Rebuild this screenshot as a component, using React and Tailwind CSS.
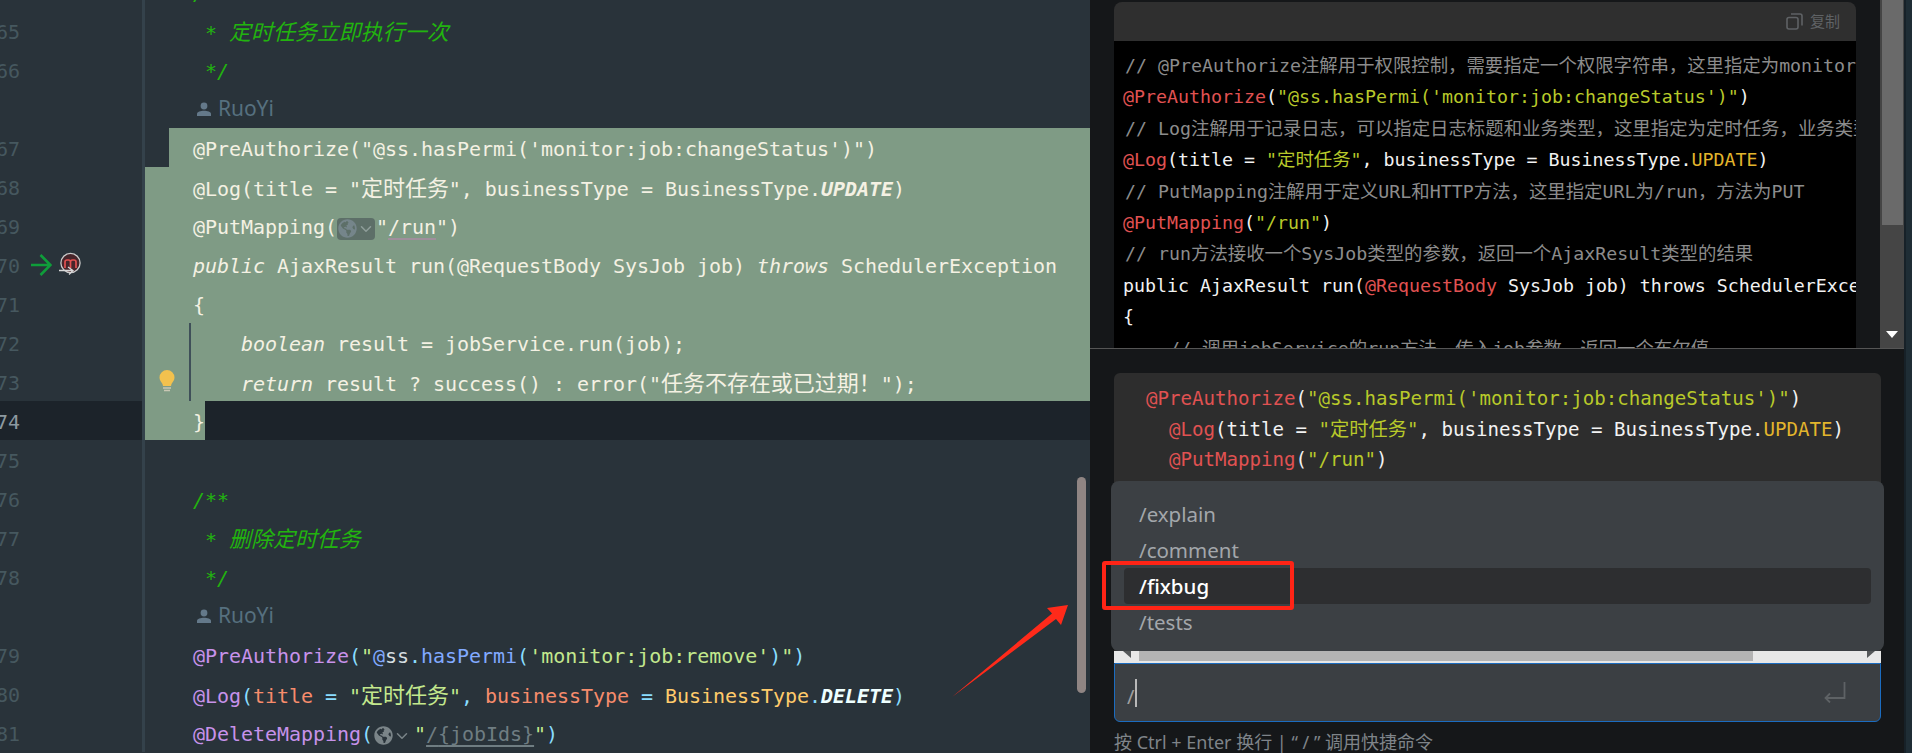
import { ChevronDown } from "lucide-react"
import { FaGlobeAmericas } from "react-icons/fa"

const MONO = "font-['DejaVu_Sans_Mono','Noto_Sans_CJK_SC',monospace]"
const SANS = "font-['Noto_Sans','Noto_Sans_CJK_SC',sans-serif]"

// left editor palette
const ANN = "text-[#c792ea]"
const PUN = "text-[#89ddff]"
const STR = "text-[#c3e88d]"
const FN = "text-[#82aaff]"
const ATTR = "text-[#f78c6c]"
const TYPE = "text-[#ffcb6b]"
const BASE = "text-[#d5dde0]"
const COMMENT = "text-[#22b30f] italic"

// right panel palette
const R_ANN = "text-[#e05252]"
const R_STR = "text-[#b8c92a]"
const R_GRAY = "pl-[2px] text-[#8c8c8c]"
const R_ENUM = "text-[#e3b52c]"

function Cn({ children }) {
  return <span className="text-[22px]">{children}</span>
}

function Rc({ children }) {
  return <span className="text-[18.4px]">{children}</span>
}

function Bc({ children }) {
  return <span className="text-[19.3px]">{children}</span>
}

function Row({ num, current, sel, first, last, gutter, children }) {
  let content = "flex-1 pl-[48px]"
  if (sel) content = "flex-1 pl-[48px] bg-[#7f9b85] text-[#f4f1e3]"
  if (first) content = "flex-1 ml-[24px] pl-[24px] bg-[#7f9b85] text-[#f4f1e3]"
  return (
    <div className={current ? "flex h-[39px] bg-[#1c232a]" : "flex h-[39px]"}>
      <div className="flex w-[142px] shrink-0 items-center">
        <span className={current ? "-ml-[10px] w-[30px] shrink-0 translate-y-[2px] text-right text-[#8d99a0]" : "-ml-[10px] w-[30px] shrink-0 translate-y-[2px] text-right text-[#46585f]"}>{num}</span>
        {gutter}
      </div>
      <div className="w-[3px] shrink-0 bg-[#34424b]" />
      {last ? (
        <div className="flex-1">
          <div className="h-full w-[60px] bg-[#7f9b85] pl-[48px] text-[#f4f1e3]">{children}</div>
        </div>
      ) : (
        <div className={content}>{children}</div>
      )}
    </div>
  )
}

function Author() {
  return (
    <div className="flex h-[39px]">
      <div className="w-[142px] shrink-0" />
      <div className="w-[3px] shrink-0 bg-[#34424b]" />
      <div className={`flex flex-1 items-center pl-[52px] ${SANS} text-[21px] text-[#56707f]`}>
        <svg width="14" height="14" viewBox="0 0 14 14" className="mr-[7px] fill-[#64798a]">
          <circle cx="7" cy="4" r="3.4" />
          <path d="M0 14v-2.2C0 9.8 3.6 8.8 7 8.8s7 1 7 3V14z" />
        </svg>
        RuoYi
      </div>
    </div>
  )
}

function Chip({ active }) {
  return (
    <span className={active ? "mr-[1px] inline-flex h-[22px] w-[38px] translate-y-[4px] items-center rounded-[4px] bg-[#5d6f68] pl-[1px]" : "mr-[1px] inline-flex h-[22px] w-[40px] translate-y-[4px] items-center pl-[1px]"}>
      <FaGlobeAmericas size={19} className={active ? "shrink-0 text-[#75858a]" : "shrink-0 text-[#7a8488]"} />
      <ChevronDown size={18} strokeWidth={2} className={active ? "shrink-0 text-[#8f9e9a]" : "shrink-0 text-[#7a8488]"} />
    </span>
  )
}

function MavenIcon() {
  return (
    <svg width="23" height="24" viewBox="0 0 23 24" className="ml-[7px] -translate-y-[1px]">
      <circle cx="11.5" cy="11" r="9.6" fill="#47252a" stroke="#c9c9c9" strokeWidth="1.3" />
      <path d="M6 16V10a2 2 0 0 1 2-2h1.5a2 2 0 0 1 2 2v6M11.5 10a2 2 0 0 1 2-2H15a2 2 0 0 1 2 2v6" fill="none" stroke="#e25050" strokeWidth="1.7" />
      <path d="M0 18.5h13M9 15l5 3.5-4 4" fill="none" stroke="#d8d8d8" strokeWidth="1.3" />
    </svg>
  )
}

function GreenArrow() {
  return (
    <svg width="21" height="22" viewBox="0 0 21 22" className="ml-[11px]">
      <path d="M0 11h19M9.5 1L19.5 11 9.5 21" fill="none" stroke="#0f9d3a" strokeWidth="2.6" />
    </svg>
  )
}

function Bulb() {
  return (
    <svg width="16" height="23" viewBox="0 0 16 23" className="absolute left-[159px] top-[8px]">
      <path d="M8 0a7.5 7.5 0 0 0-7.5 7.5c0 3 1.8 4.4 3 6.5l.5 2h8l.5-2c1.2-2.1 3-3.5 3-6.5A7.5 7.5 0 0 0 8 0z" fill="#f2c14e" />
      <path d="M4 18h8M5 20.5h6" stroke="#c9c7b4" strokeWidth="1.6" />
    </svg>
  )
}

function Editor() {
  return (
    <div className={`relative h-full w-[1090px] shrink-0 overflow-hidden bg-[#29333a] ${MONO} text-[20px] leading-[43px] tracking-[-0.04px] whitespace-pre`}>
      <div className="-mt-[28px]">
        <Row num="64"><span className={COMMENT}>/**</span></Row>
        <Row num="65"><span className={COMMENT}> * <Cn>定时任务立即执行一次</Cn></span></Row>
        <Row num="66"><span className={COMMENT}> */</span></Row>
        <Author />
        <Row num="67" first>@PreAuthorize("@ss.hasPermi('monitor:job:changeStatus')")</Row>
        <Row num="68" sel>
          @Log(title = "<Cn>定时任务</Cn>", businessType = BusinessType.<span className="font-bold italic">UPDATE</span>)
        </Row>
        <Row num="69" sel>
          @PutMapping(<Chip active />"<span className="underline decoration-[#a08f9c] underline-offset-4">/run</span>")
        </Row>
        <Row num="70" sel gutter={<><GreenArrow /><MavenIcon /></>}>
          <span className="italic">public</span> AjaxResult run(@RequestBody SysJob job) <span className="italic">throws</span> SchedulerException
        </Row>
        <Row num="71" sel>{"{"}</Row>
        <Row num="72" sel>
          <div className="-ml-[4px] h-full border-l-2 border-[#3f5059] pl-[50px]">
            <span className="italic">boolean</span> result = jobService.run(job);
          </div>
        </Row>
        <div className="relative">
          <Row num="73" sel>
            <div className="-ml-[4px] h-full border-l-2 border-[#3f5059] pl-[50px]">
              <span className="italic">return</span> result ? success() : error("<Cn>任务不存在或已过期！</Cn>");
            </div>
          </Row>
          <Bulb />
        </div>
        <Row num="74" current last>{"}"}</Row>
        <Row num="75" />
        <Row num="76"><span className={COMMENT}>/**</span></Row>
        <Row num="77"><span className={COMMENT}> * <Cn>删除定时任务</Cn></span></Row>
        <Row num="78"><span className={COMMENT}> */</span></Row>
        <Author />
        <Row num="79">
          <span className={ANN}>@PreAuthorize</span><span className={PUN}>(</span><span className={STR}>"</span><span className={FN}>@</span><span className={BASE}>ss</span><span className={PUN}>.</span><span className={FN}>hasPermi</span><span className={PUN}>(</span><span className={STR}>'monitor:job:remove'</span><span className={PUN}>)</span><span className={STR}>"</span><span className={PUN}>)</span>
        </Row>
        <Row num="80">
          <span className={ANN}>@Log</span><span className={PUN}>(</span><span className={ATTR}>title</span> <span className={PUN}>=</span> <span className={STR}>"<Cn>定时任务</Cn>"</span><span className={PUN}>,</span> <span className={ATTR}>businessType</span> <span className={PUN}>=</span> <span className={TYPE}>BusinessType</span><span className={PUN}>.</span><span className="font-bold italic text-[#eeffff]">DELETE</span><span className={PUN}>)</span>
        </Row>
        <Row num="81">
          <span className={ANN}>@DeleteMapping</span><span className={PUN}>(</span><Chip /><span className={STR}>"</span><span className="text-[#6f7d82] underline decoration-[#6f7d82] underline-offset-4">/{"{jobIds}"}</span><span className={STR}>"</span><span className={PUN}>)</span>
        </Row>
      </div>
      <div className="absolute left-[1077px] top-[477px] h-[216px] w-[9px] rounded-full bg-[#8f8583]" />
    </div>
  )
}

function AnswerPane() {
  return (
    <div className="flex h-[348px] shrink-0 pl-[24px]">
      <div className="mt-[2px] flex w-[742px] shrink-0 flex-col">
        <div className="flex h-[39px] shrink-0 items-center justify-end rounded-t-[8px] bg-[#2f2f2f] pr-[16px] text-[#5f6265]">
          <svg width="17" height="17" viewBox="0 0 17 17" fill="none" stroke="currentColor" strokeWidth="1.6" className="mr-[7px]">
            <rect x="1" y="4.5" width="11" height="11.5" rx="2" />
            <path d="M5 1h9a2 2 0 0 1 2 2v9.5" />
          </svg>
          <span className={`${SANS} text-[15px]`}>复制</span>
        </div>
        <div className={`flex-1 overflow-hidden bg-black pl-[9px] pt-[9px] ${MONO} text-[18.27px] leading-[31.4px] whitespace-pre text-[#f2f2f2]`}>
          <div className={R_GRAY}>// @PreAuthorize<Rc>注解用于权限控制，需要指定一个权限字符串，这里指定为</Rc>monitor:job:changeStatus</div>
          <div><span className={R_ANN}>@PreAuthorize</span>(<span className={R_STR}>"@ss.hasPermi('monitor:job:changeStatus')"</span>)</div>
          <div className={R_GRAY}>// Log<Rc>注解用于记录日志，可以指定日志标题和业务类型，这里指定为定时任务，业务类型为更新</Rc></div>
          <div><span className={R_ANN}>@Log</span>(title = <span className={R_STR}>"<Rc>定时任务</Rc>"</span>, businessType = BusinessType.<span className={R_ENUM}>UPDATE</span>)</div>
          <div className={R_GRAY}>// PutMapping<Rc>注解用于定义</Rc>URL<Rc>和</Rc>HTTP<Rc>方法，这里指定</Rc>URL<Rc>为</Rc>/run<Rc>，方法为</Rc>PUT</div>
          <div><span className={R_ANN}>@PutMapping</span>(<span className={R_STR}>"/run"</span>)</div>
          <div className={R_GRAY}>// run<Rc>方法接收一个</Rc>SysJob<Rc>类型的参数，返回一个</Rc>AjaxResult<Rc>类型的结果</Rc></div>
          <div>public AjaxResult run(<span className={R_ANN}>@RequestBody</span> SysJob job) throws SchedulerException</div>
          <div>{"{"}</div>
          <div className={R_GRAY}>    // <Rc>调用</Rc>jobService<Rc>的</Rc>run<Rc>方法，传入</Rc>job<Rc>参数，返回一个布尔值</Rc></div>
        </div>
      </div>
      <div className="ml-[24px] flex w-[24px] shrink-0 flex-col bg-[#454545]">
        <div className="ml-[2px] mr-[1px] h-[225px] bg-[#6a6a6a]" />
        <svg width="12" height="7" viewBox="0 0 12 7" className="ml-[6px] mt-[106px] fill-white">
          <path d="M0 0h12L6 7z" />
        </svg>
      </div>
    </div>
  )
}

function SlashMenu() {
  const items = ["/explain", "/comment", "/fixbug", "/tests"]
  return (
    <div className={`absolute left-[21px] top-[132px] h-[170px] w-[773px] rounded-[8px] bg-[#3c4044] px-[13px] pt-[15px] ${SANS} text-[20.5px] leading-[36px]`}>
      {items.map((item) => (
        <div
          key={item}
          className={item === "/fixbug" ? "h-[36px] rounded-[4px] bg-[#2d2e30] pl-[15px] font-medium text-white" : "h-[36px] pl-[15px] text-[#a3a7ab]"}
        >
          {item}
        </div>
      ))}
    </div>
  )
}

function InputPane() {
  return (
    <div className="relative flex-1 bg-[#151719] pl-[24px] pt-[24px]">
      <div className="flex h-[290px] w-[767px] flex-col overflow-hidden rounded-t-[6px] bg-[#2d2d2d]">
        <div className={`flex-1 overflow-hidden pl-[32px] pt-[11px] ${MONO} text-[19.1px] leading-[30.5px] whitespace-pre text-[#f2f2f2]`}>
          <div><span className={R_ANN}>@PreAuthorize</span>(<span className={R_STR}>"@ss.hasPermi('monitor:job:changeStatus')"</span>)</div>
          <div>  <span className={R_ANN}>@Log</span>(title = <span className={R_STR}>"<Bc>定时任务</Bc>"</span>, businessType = BusinessType.<span className={R_ENUM}>UPDATE</span>)</div>
          <div>  <span className={R_ANN}>@PutMapping</span>(<span className={R_STR}>"/run"</span>)</div>
          <div>  public AjaxResult run(<span className={R_ANN}>@RequestBody</span> SysJob job) throws SchedulerException</div>
        </div>
        <div className="flex h-[12px] shrink-0 items-start bg-[#e8e8e8]">
          <div className="flex h-full w-[25px] shrink-0 justify-center">
            <svg width="8" height="7" viewBox="0 0 8 7" className="fill-[#55585a]"><path d="M0 0h8v7z" /></svg>
          </div>
          <div className="h-[10px] w-[614px] bg-[#b4b4b4]" />
          <div className="flex flex-1 justify-end pr-[6px]">
            <svg width="8" height="7" viewBox="0 0 8 7" className="fill-[#55585a]"><path d="M0 0h8L0 7z" /></svg>
          </div>
        </div>
      </div>
      <div className="flex h-[59px] w-[767px] items-center rounded-b-[6px] border border-[#1b6cc0] bg-[#3b3f43] pl-[12px] pr-[34px]">
        <span className={`${SANS} translate-y-[4px] text-[20px] text-[#a0a0a0]`}>/</span>
        <span className="ml-[1px] h-[28px] w-[2px] bg-[#b8b8b8]" />
        <svg width="22" height="21" viewBox="0 0 22 21" fill="none" stroke="#5e6265" strokeWidth="1.8" className="ml-auto">
          <path d="M20.5 0v16H1M6 11.5L1.5 16 6 20.5" />
        </svg>
      </div>
      <p className={`mt-[8px] ${SANS} text-[18px] leading-[24px] text-[#7f8489]`}>按 Ctrl + Enter 换行 | “ / ” 调用快捷命令</p>
      <SlashMenu />
    </div>
  )
}

export default function App() {
  return (
    <div className="relative flex h-[753px] w-[1912px] overflow-hidden bg-[#151719]">
      <Editor />
      <div className="flex h-full w-[814px] shrink-0 flex-col bg-[#151719]">
        <AnswerPane />
        <div className="h-px shrink-0 bg-[#555]" />
        <InputPane />
      </div>
      <div className="h-full flex-1 border-l-2 border-[#172128] bg-[#1f2d35]" />

      {/* red annotations on top of the screenshot */}
      <div className="absolute left-[1102px] top-[561px] h-[49px] w-[192px] rounded-[3px] border-[4px] border-[#ff2416]" />
      <svg width="120" height="96" viewBox="950 603 120 96" className="absolute left-[950px] top-[603px] fill-[#ff2a1a]">
        <path d="M952 697L1052 613.5 1047 608 1068 605 1061 625 1056 619z" />
      </svg>
    </div>
  )
}
